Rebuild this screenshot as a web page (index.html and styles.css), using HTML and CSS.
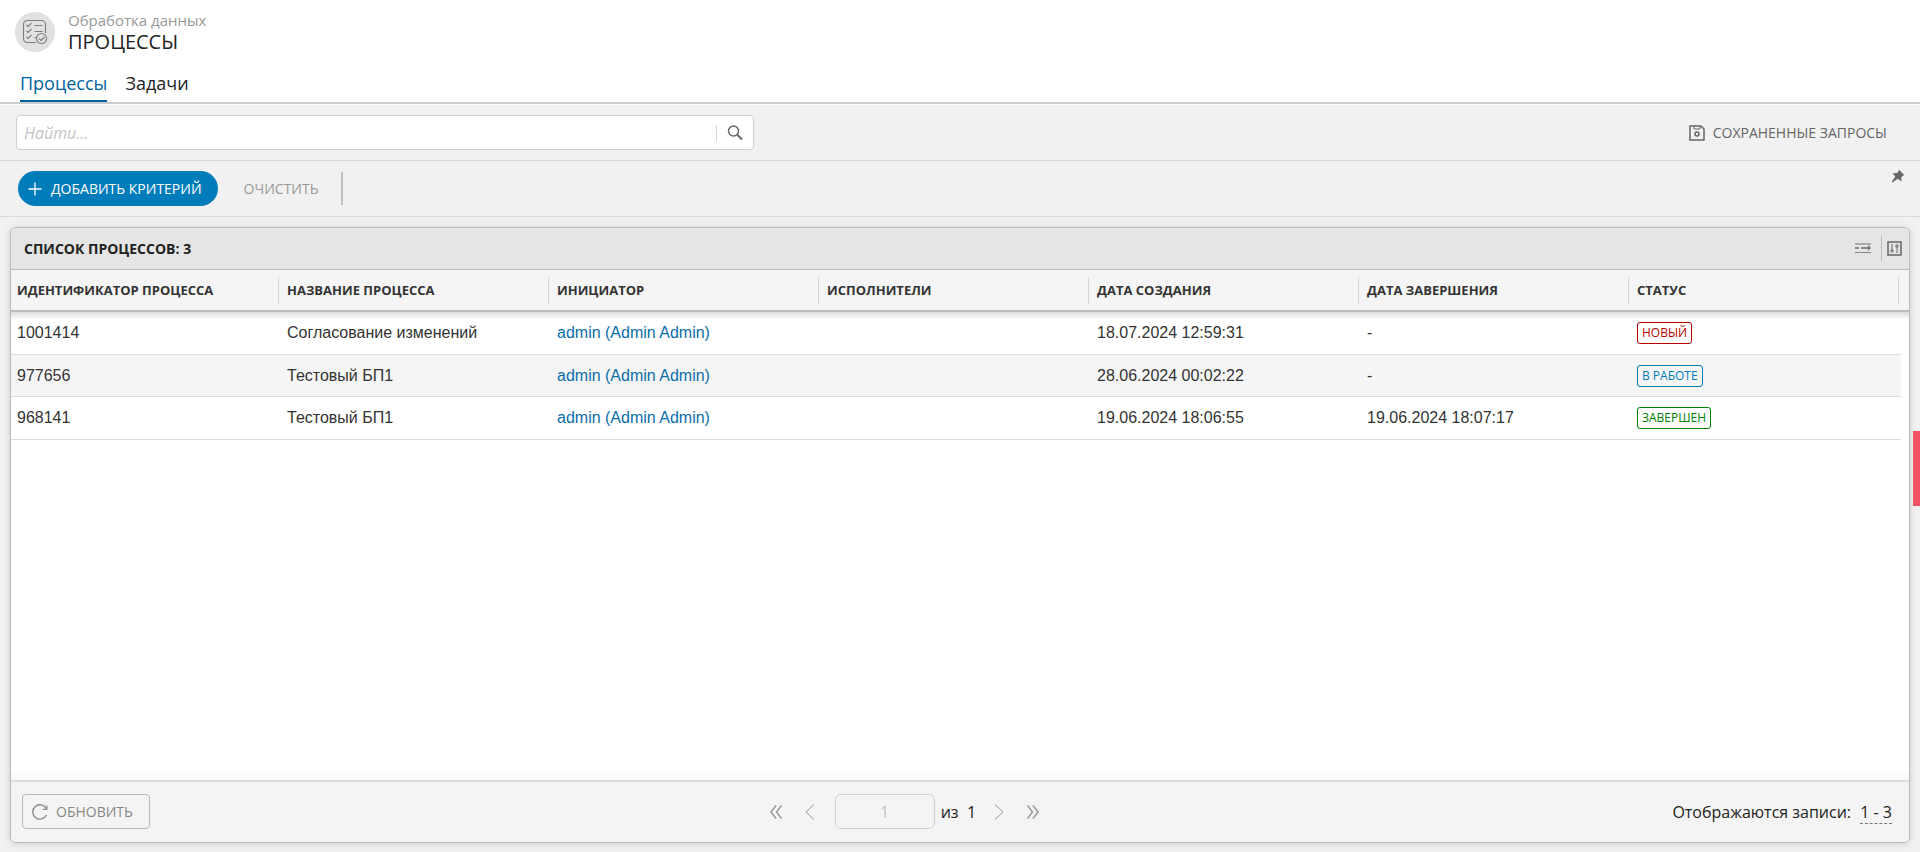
FILE: index.html
```html
<!DOCTYPE html>
<html lang="ru">
<head>
<meta charset="utf-8">
<title>Процессы</title>
<link rel="stylesheet" href="styles.css">
</head>
<body>
<header class="page-head">
  <div class="brand">
    <span class="brand-icon">
      <svg width="26" height="26" viewBox="0 0 26 26" fill="none" stroke="#7d7d7d" stroke-width="1.100">
        <path d="M14 23.500H5.500a4 4 0 0 1-4-4V5.500a4 4 0 0 1 4-4h14a4 4 0 0 1 4 4V14"/>
        <path d="M4.500 6l1.500 1.500 3.500-3.500M4.500 12l1.500 1.500 3.500-3.500M4.500 18l1.500 1.500 3.500-3.500M12.500 6.500h8M12.500 12.500h8M12.500 18.500h2"/>
        <circle cx="19.500" cy="19.500" r="5"/>
        <path d="M17 19.500l2 2 3.500-3.500"/>
      </svg>
    </span>
    <div>
      <div class="section">Обработка данных</div>
      <h1 class="title">ПРОЦЕССЫ</h1>
    </div>
  </div>
  <nav class="tabs">
    <a class="tab active" href="#processes">Процессы</a>
    <a class="tab" href="#tasks">Задачи</a>
  </nav>
</header>

<div class="search-row">
  <form class="search">
    <input class="search-input" type="text" placeholder="Найти..." aria-label="Найти">
    <button class="search-button" type="button" aria-label="Поиск">
      <svg width="16" height="16" viewBox="0 0 16 16" fill="none" stroke="#666" stroke-width="1.500"><circle cx="6.500" cy="6" r="5"/><path d="M10 9.500l5 5" stroke-width="2"/></svg>
    </button>
  </form>
  <button class="saved" type="button">
    <svg width="16" height="16" viewBox="0 0 16 16" fill="none" stroke="#666" stroke-width="1.500"><path d="M1 1h11l3 3v11H1z"/><path d="M5 1v3h6V1" stroke-width="1"/><circle cx="8" cy="9" r="2"/></svg>
    СОХРАНЕННЫЕ ЗАПРОСЫ
  </button>
</div>

<div class="criteria-row">
  <button class="add" type="button">
    <svg width="14" height="14" viewBox="0 0 14 14" stroke="#fff" stroke-width="1.300"><path d="M7 .5v13M.5 7h13"/></svg>
    ДОБАВИТЬ КРИТЕРИЙ
  </button>
  <button class="clear" type="button">ОЧИСТИТЬ</button>
  <span class="divider"></span>
  <button class="pin" type="button" aria-label="Закрепить">
    <svg width="14" height="14" viewBox="0 0 14 14" fill="#666"><path d="M8 .7l5.300 5.300-1.500.7-1.500 1.500.2 4.300-3.800-2.800L1.500 13.500l-.8-.8 3.600-5.100L1.500 4.200l4.500-.3 1.500-1.700z"/></svg>
  </button>
</div>

<main class="content">
  <section class="panel">
    <div class="panel-head">
      <h2 class="panel-title">СПИСОК ПРОЦЕССОВ: 3</h2>
      <button class="tool wrap-tool" type="button" aria-label="Перенос строк">
        <svg width="16" height="12" viewBox="0 0 16 12" fill="none" stroke="#888"><path d="M0 2h16" stroke="#aaa" stroke-width="2"/><path d="M0 6h4M6 6h8" stroke-width="2"/><path d="M0 10.500h16"/><path d="M13 3l3 3-3 3z" fill="#777" stroke="none"/></svg>
      </button>
      <button class="tool columns-tool" type="button" aria-label="Настройка столбцов">
        <svg width="15" height="15" viewBox="0 0 15 15" fill="none" stroke="#666"><path d="M1 1h13v13H1z" stroke-width="1.500"/><path d="M5 3v6M10 6v6"/><circle cx="5" cy="10" r="1.200"/><circle cx="10" cy="5" r="1.200"/></svg>
      </button>
    </div>
    <div class="grid">
      <table class="table">
        <thead>
          <tr><th>ИДЕНТИФИКАТОР ПРОЦЕССА</th><th>НАЗВАНИЕ ПРОЦЕССА</th><th>ИНИЦИАТОР</th><th>ИСПОЛНИТЕЛИ</th><th>ДАТА СОЗДАНИЯ</th><th>ДАТА ЗАВЕРШЕНИЯ</th><th>СТАТУС</th></tr>
        </thead>
        <tbody>
          <tr><td>1001414</td><td>Согласование изменений</td><td><a href="#admin">admin (Admin Admin)</a></td><td></td><td>18.07.2024 12:59:31</td><td>-</td><td><span class="status new">НОВЫЙ</span></td></tr>
          <tr><td>977656</td><td>Тестовый БП1</td><td><a href="#admin">admin (Admin Admin)</a></td><td></td><td>28.06.2024 00:02:22</td><td>-</td><td><span class="status work">В РАБОТЕ</span></td></tr>
          <tr><td>968141</td><td>Тестовый БП1</td><td><a href="#admin">admin (Admin Admin)</a></td><td></td><td>19.06.2024 18:06:55</td><td>19.06.2024 18:07:17</td><td><span class="status done">ЗАВЕРШЕН</span></td></tr>
        </tbody>
      </table>
    </div>
    <footer class="panel-foot">
      <div class="foot-left">
        <button class="refresh" type="button">
          <svg width="16" height="16" viewBox="0 0 16 16" fill="none" stroke="#888" stroke-width="1.300"><path d="M14.300 4.500A7.200 7.200 0 1 0 14.500 11"/><path d="M14.800 1.500v3.800h-3.800"/></svg>
          ОБНОВИТЬ
        </button>
      </div>
      <div class="pager">
        <button class="page-button" type="button" aria-label="Первая страница"><svg width="12" height="14" viewBox="0 0 12 14" fill="none" stroke="#999" stroke-width="1.500"><path d="M6 .5L1 7l5 6.500M11.500.5l-5 6.500 5 6.500"/></svg></button>
        <button class="page-button" type="button" aria-label="Предыдущая страница"><svg width="10" height="16" viewBox="0 0 10 16" fill="none" stroke="#999"><path d="M9 .5L1 8l8 7.500"/></svg></button>
        <input class="page-input" type="text" value="1" aria-label="Страница">
        <span class="page-total">из&nbsp; 1</span>
        <button class="page-button" type="button" aria-label="Следующая страница"><svg width="10" height="16" viewBox="0 0 10 16" fill="none" stroke="#999"><path d="M1 .5L9 8l-8 7.500"/></svg></button>
        <button class="page-button" type="button" aria-label="Последняя страница"><svg width="12" height="14" viewBox="0 0 12 14" fill="none" stroke="#999" stroke-width="1.500"><path d="M.5.5l5 6.500-5 6.500M6 .5L11 7l-5 6.500"/></svg></button>
      </div>
      <div class="foot-right">Отображаются записи: <a class="range" href="#range">1 - 3</a></div>
    </footer>
  </section>
</main>
<div class="side-tab"></div>
</body>
</html>
```
FILE: styles.css
```css
* { box-sizing: border-box; }
body {
  margin: 0;
  min-height: 100vh;
  display: flex;
  flex-direction: column;
  background: #f1f1f1;
  color: #222;
  font-family: "Open Sans", "Noto Sans", sans-serif;
  font-size: 16px;
}
button, input { font-family: inherit; }
button { background: none; border: 0; padding: 0; display: inline-flex; align-items: center; }
svg { display: block; flex: none; }

.page-head { background: #fff; border-bottom: 2px solid #ccc; }
.brand { display: flex; gap: 13px; padding: 10px 15px 0; }
.brand-icon {
  width: 40px;
  height: 40px;
  margin-top: 2px;
  border-radius: 50%;
  background: #e1e1e1;
  display: grid;
  place-items: center;
}
.section { font-size: 15px; line-height: 20px; color: #999; }
.title { margin: 0; font-size: 20px; line-height: 24px; font-weight: 500; }
.tabs { display: flex; gap: 18px; padding: 15px 20px 0; }
.tab {
  padding-bottom: 3px;
  border-bottom: 2px solid transparent;
  font-size: 18px;
  line-height: 28px;
  color: #222;
  text-decoration: none;
}
.tab.active { color: #00639c; border-color: #00639c; }

.search-row {
  display: flex;
  align-items: center;
  justify-content: space-between;
  padding: 10px 33px 10px 16px;
  border-top: 1px solid #fff;
  border-bottom: 1px solid #d8d8d8;
}
.search {
  display: flex;
  align-items: center;
  width: 738px;
  height: 35px;
  border: 1px solid #d0d0d0;
  border-radius: 4px;
  background: #fff;
}
.search-input {
  flex: 1;
  border: 0;
  padding: 0 7px;
  outline: 0;
  background: none;
  font-size: 16px;
}
.search-input::placeholder { color: #c4c4c4; font-style: italic; }
.search-button { height: 16px; padding: 0 10px; border-left: 1px solid #d4d4d4; }
.saved { gap: 8px; font-size: 14px; color: #666; }

.criteria-row {
  display: flex;
  align-items: center;
  min-height: 56px;
  padding: 0 15px 0 18px;
  border-bottom: 1px solid #d8d8d8;
}
.add {
  gap: 9px;
  height: 35px;
  padding: 0 16px 0 10px;
  border-radius: 18px;
  background: #007cba;
  color: #fff;
  font-size: 14px;
}
.clear { margin-left: 26px; font-size: 14px; color: #999; }
.divider { width: 2px; height: 33px; margin-left: 22px; background: #bfbfbf; }
.pin { align-self: flex-start; margin-left: auto; padding-top: 8px; }

.content { flex: 1; display: flex; padding: 10px 10px 9px; }
.panel {
  flex: 1;
  display: flex;
  flex-direction: column;
  border: 1px solid #bbb;
  border-radius: 6px;
  background: #fff;
  overflow: hidden;
  box-shadow: 0 1px 6px #ccc;
}
.panel-head {
  display: flex;
  align-items: center;
  height: 42px;
  padding: 0 7px 0 13px;
  border-bottom: 1px solid #bbb;
  background: #e5e5e5;
}
.panel-title { margin: 0 auto 0 0; font-size: 14px; font-weight: 700; }
.tool { height: 25px; }
.wrap-tool { padding: 0 10px 2px 0; border-right: 1px solid #bbb; }
.columns-tool { padding-left: 5px; }

.grid {
  flex: 1;
  padding-right: 8px;
  background:
    linear-gradient(#bbb, #bbb) 0 40px / 100% 2px no-repeat,
    linear-gradient(#f5f5f5, #f5f5f5) 0 0 / 100% 40px no-repeat,
    linear-gradient(#ddd, #fff) 0 42px / 100% 8px no-repeat,
    linear-gradient(#fff, #f8f8f8) 0 100% / 100% 10px no-repeat,
    #fff;
}
.table { width: 100%; border-collapse: separate; border-spacing: 0; table-layout: fixed; }
th, td { padding: 0 6px; text-align: left; white-space: nowrap; }
th { height: 42px; padding-bottom: 2px; position: relative; font-size: 13px; font-weight: 700; color: #333; }
th::after {
  content: "";
  position: absolute;
  top: 7px;
  right: 2px;
  width: 1px;
  height: 27px;
  background: #d4d4d4;
}
td {
  height: 43px;
  border-bottom: 1px solid #ddd;
  font-family: "Liberation Sans", Arial, sans-serif;
  font-size: 16px;
  color: #333;
}
td a { color: #0a6ea8; text-decoration: none; }
tbody tr:nth-child(even) { background: #f5f5f5; }
tbody tr:nth-child(even) td { height: 42px; }
.status {
  display: inline-block;
  padding: 0 4px;
  border: 1px solid;
  border-radius: 3px;
  font-family: "Open Sans", "Noto Sans", sans-serif;
  font-size: 12px;
  line-height: 20px;
}
.new { color: #b90000; }
.work { color: #007cba; }
.done { color: #008000; }

.panel-foot {
  display: grid;
  grid-template-columns: 7fr auto 8fr;
  align-items: center;
  padding: 12px 17px 13px 11px;
  border-top: 2px solid #dcdcdc;
  background: #f4f4f4;
}
.refresh {
  gap: 8px;
  height: 35px;
  padding: 0 16px 0 9px;
  border: 1px solid #b8b8b8;
  border-radius: 4px;
  font-size: 14px;
  color: #888;
}
.pager { display: flex; align-items: center; }
.page-button { justify-content: center; width: 34px; height: 35px; }
.page-input {
  width: 100px;
  height: 35px;
  margin-left: 8px;
  border: 1px solid #d0d0d0;
  border-radius: 6px;
  background: none;
  text-align: center;
  font-size: 16px;
  color: #c4c4c4;
}
.page-total { margin: 0 6px; }
.foot-right { text-align: right; }
.range { margin-left: 5px; border-bottom: 1px dashed #777; color: inherit; text-decoration: none; }
.side-tab { position: fixed; right: 0; top: 431px; width: 7px; height: 75px; background: #f05366; }
```
